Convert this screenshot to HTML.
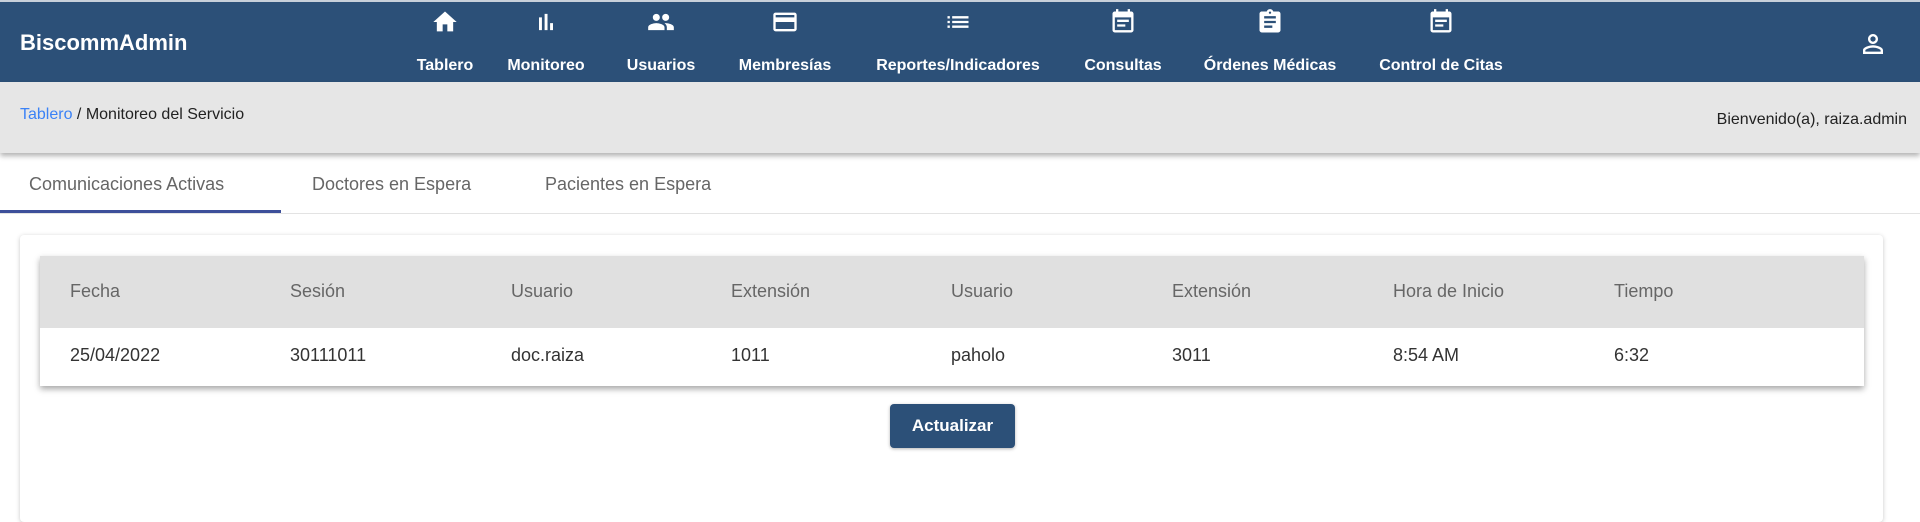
<!DOCTYPE html>
<html><head><meta charset="utf-8"><style>
*{margin:0;padding:0;box-sizing:border-box}
html,body{width:1920px;height:522px;overflow:hidden}
body{background:#fff;font-family:"Liberation Sans",sans-serif;position:relative}
.nav{position:absolute;left:0;top:0;width:1920px;height:82px;background:#2c5078;border-top:2px solid #c8d0da}
.brand{position:absolute;left:20px;top:28px;color:#fff;font-weight:bold;font-size:22px}
.item{position:absolute;top:0;width:200px;margin-left:-100px;text-align:center;color:#fff}
.item svg{position:absolute;left:86px;top:6px;width:28px;height:28px;fill:#fff}
.item span{position:absolute;left:0;width:200px;top:55px;font-weight:bold;font-size:16px}
.user{position:absolute;left:1858px;top:27px;width:30px;height:30px;fill:#fff}
.crumb{position:absolute;left:0;top:82px;width:1920px;height:71px;background:#e6e6e6;box-shadow:0 3px 5px rgba(0,0,0,.3)}
.crumb .l{position:absolute;left:20px;top:24px;font-size:16px;color:#222}
.crumb .l a{color:#3b82f6}
.crumb .r{position:absolute;right:13px;top:29px;font-size:16px;color:#222}
.tabs{position:absolute;left:0;top:162px;width:1920px;height:52px;border-bottom:1px solid #e3e3e3}
.tab{position:absolute;top:12px;font-size:18px;color:#666}
.ul{position:absolute;left:0;top:48px;width:281px;height:3px;background:#3d4f9a}
.card{position:absolute;left:20px;top:235px;width:1863px;height:287px;background:#fff;border-radius:4px;box-shadow:0 1px 5px rgba(0,0,0,.22)}
.tbl{position:absolute;left:40px;top:256px;width:1824px;height:130px;box-shadow:0 3px 6px rgba(0,0,0,.35);background:#fff}
.hd{position:absolute;left:0;top:0;width:100%;height:72px;background:#e0e0e0}
.c{position:absolute;font-size:18px}
.hd .c{top:25px;color:#666}
.rw .c{top:89px;color:#333}
.btn{position:absolute;left:890px;top:404px;width:125px;height:44px;background:#2c5078;border-radius:4px;color:#fff;font-weight:bold;font-size:17px;text-align:center;line-height:44px;box-shadow:0 1px 3px rgba(0,0,0,.3)}
</style></head><body>
<div class="nav">
<div class="brand">BiscommAdmin</div>
<div class="item" style="left:445px"><svg viewBox="0 0 24 24"><path d="M10 20v-6h4v6h5v-8h3L12 3 2 12h3v8z"/></svg><span>Tablero</span></div>
<div class="item" style="left:546px"><svg viewBox="0 0 24 24"><path d="M6 8h2.5v11H6zM10.8 5h2.5v14h-2.5zM15.5 13H18v6h-2.5z"/></svg><span>Monitoreo</span></div>
<div class="item" style="left:661px"><svg viewBox="0 0 24 24"><path d="M16 11c1.66 0 2.99-1.340 2.99-3S17.66 5 16 5s-3 1.34-3 3 1.34 3 3 3zm-8 0c1.66 0 2.99-1.34 2.99-3S9.66 5 8 5 5 6.34 5 8s1.34 3 3 3zm0 2c-2.33 0-7 1.17-7 3.5V19h14v-2.5C15 14.17 10.33 13 8 13zm8 0c-.29 0-.62.02-.97.05 1.16.84 1.97 1.97 1.97 3.45V19h6v-2.5c0-2.330-4.67-3.5-7-3.5z"/></svg><span>Usuarios</span></div>
<div class="item" style="left:785px"><svg viewBox="0 0 24 24"><path d="M20 4H4c-1.11 0-2 .89-2 2v12c0 1.11.89 2 2 2h16c1.11 0 2-.89 2-2V6c0-1.11-.89-2-2-2zm0 14H4v-6h16v6zm0-10H4V6h16v2z"/></svg><span>Membresías</span></div>
<div class="item" style="left:958px"><svg viewBox="0 0 24 24"><path d="M3 13h2v-2H3v2zm0 4h2v-2H3v2zm0-8h2V7H3v2zm4 4h14v-2H7v2zm0 4h14v-2H7v2zM7 7v2h14V7H7z"/></svg><span>Reportes/Indicadores</span></div>
<div class="item" style="left:1123px"><svg viewBox="0 0 24 24"><path d="M19 3h-1V1h-2v2H8V1H6v2H5c-1.1 0-2 .9-2 2v14c0 1.1.9 2 2 2h14c1.1 0 2-.9 2-2V5c0-1.1-.9-2-2-2zm0 16H5V8h14v11zM7 10h10v2H7zm0 4h7v2H7z"/></svg><span>Consultas</span></div>
<div class="item" style="left:1270px"><svg viewBox="0 0 24 24"><path d="M19 3h-4.18C14.4 1.84 13.3 1 12 1s-2.4.84-2.82 2H5c-1.1 0-2 .9-2 2v14c0 1.1.9 2 2 2h14c1.1 0 2-.9 2-2V5c0-1.1-.9-2-2-2zm-7 0c.55 0 1 .45 1 1s-.45 1-1 1-1-.45-1-1 .45-1 1-1zm2 14H7v-2h7v2zm3-4H7v-2h10v2zm0-4H7V7h10v2z"/></svg><span>Órdenes Médicas</span></div>
<div class="item" style="left:1441px"><svg viewBox="0 0 24 24"><path d="M19 3h-1V1h-2v2H8V1H6v2H5c-1.1 0-2 .9-2 2v14c0 1.1.9 2 2 2h14c1.1 0 2-.9 2-2V5c0-1.1-.9-2-2-2zm0 16H5V8h14v11zM7 10h10v2H7zm0 4h7v2H7z"/></svg><span>Control de Citas</span></div>
<svg class="user" viewBox="0 0 24 24"><path d="M12 5.9c1.16 0 2.1.94 2.1 2.1s-.94 2.1-2.1 2.1S9.9 9.16 9.9 8s.94-2.1 2.1-2.1m0 9c2.97 0 6.1 1.46 6.1 2.1v1.1H5.9V17c0-.64 3.13-2.1 6.1-2.1M12 4C9.79 4 8 5.79 8 8s1.79 4 4 4 4-1.79 4-4-1.79-4-4-4zm0 9c-2.67 0-8 1.34-8 4v3h16v-3c0-2.66-5.33-4-8-4z"/></svg>
</div>
<div class="crumb"><div class="l"><a>Tablero</a> / Monitoreo del Servicio</div><div class="r">Bienvenido(a), raiza.admin</div></div>
<div class="tabs">
<div class="tab" style="left:29px">Comunicaciones Activas</div>
<div class="tab" style="left:312px">Doctores en Espera</div>
<div class="tab" style="left:545px">Pacientes en Espera</div>
<div class="ul"></div>
</div>
<div class="card"></div>
<div class="tbl">
<div class="hd">
<div class="c" style="left:30px">Fecha</div><div class="c" style="left:250px">Sesión</div><div class="c" style="left:471px">Usuario</div><div class="c" style="left:691px">Extensión</div><div class="c" style="left:911px">Usuario</div><div class="c" style="left:1132px">Extensión</div><div class="c" style="left:1353px">Hora de Inicio</div><div class="c" style="left:1574px">Tiempo</div>
</div>
<div class="rw">
<div class="c" style="left:30px">25/04/2022</div><div class="c" style="left:250px">30111011</div><div class="c" style="left:471px">doc.raiza</div><div class="c" style="left:691px">1011</div><div class="c" style="left:911px">paholo</div><div class="c" style="left:1132px">3011</div><div class="c" style="left:1353px">8:54 AM</div><div class="c" style="left:1574px">6:32</div>
</div>
</div>
<div class="btn">Actualizar</div>
</body></html>
